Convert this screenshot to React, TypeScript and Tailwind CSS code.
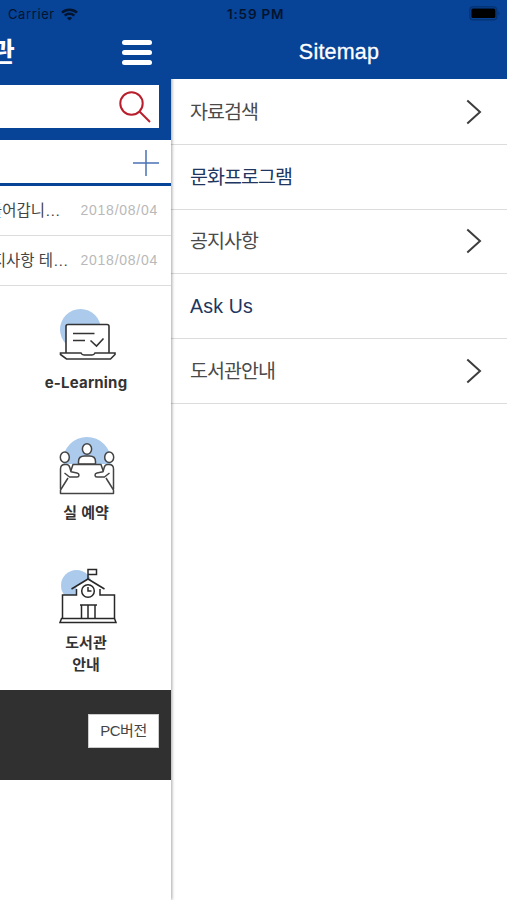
import React from "react";

const FONT = "font-['Liberation_Sans','Noto_Sans_CJK_KR',sans-serif]";

function Chevron() {
  return (
    <svg className="h-[26px] w-4" viewBox="0 0 16 26" fill="none" stroke="#3d3d3d" strokeWidth="2">
      <path d="M1.3 1.5 14 13 1.3 24.5" />
    </svg>
  );
}

function StatusBar() {
  return (
    <div className="absolute inset-x-0 top-0 z-10 h-7 leading-7 text-[#03142f]">
      <div className="absolute left-[8px] flex items-center font-['Inter',sans-serif]">
        <span className="text-[13px] tracking-[0.6px]">Carrier</span>
        <svg className="ml-[6px] h-[13px] w-[17px]" viewBox="0 0 17 13" fill="none" stroke="#03142f" strokeWidth="2.6">
          <path d="M1 4.6C5.2.7 11.8.7 16 4.6" />
          <path d="M3.7 7.6c2.7-2.4 6.9-2.4 9.6 0" />
          <path d="M8.5 12.6 5.8 9.9c1.4-1.3 4-1.3 5.4 0z" fill="#03142f" stroke="none" />
        </svg>
      </div>
      <span className="absolute left-[227px] font-['Inter',sans-serif] text-[13.5px] font-semibold tracking-[0.8px]">1:59 PM</span>
      <svg className="absolute left-[469px] top-[6px] h-[15px] w-8" viewBox="0 0 32 15">
        <rect x="0.8" y="0.8" width="27" height="13" rx="3.4" fill="none" stroke="#063270" strokeWidth="1.2" />
        <rect x="2.4" y="2.6" width="24" height="9.4" rx="1.5" fill="#000" />
        <path d="M29.3 5.2c1.5.6 1.5 3.8 0 4.4z" fill="#063270" />
      </svg>
    </div>
  );
}

function Notice({ title, gap }: { title: string; gap: string }) {
  return (
    <div className="flex h-[50px] items-center justify-end border-b border-[#dcdcdc] pr-[12.5px]">
      <span className={`shrink-0 whitespace-nowrap text-[15.5px] text-[#444] ${gap}`}>{title}</span>
      <span className="w-[78px] shrink-0 whitespace-nowrap text-[14px] tracking-[0.75px] text-[#b9b9b9]">2018/08/04</span>
    </div>
  );
}

function LaptopIcon() {
  return (
    <svg className="ml-[4px] h-[54px] w-[58px]" viewBox="0 0 58 54" fill="none" stroke="#333" strokeWidth="1.6">
      <circle cx="21.5" cy="20.5" r="20.5" fill="#abcaec" stroke="none" />
      <path d="M7 44V17.5q0-2 2-2h39q2 0 2 2V44" fill="#fff" />
      <path d="M1.5 44h20.500q1 2 3 2h8q2 0 3-2h20v1.5L51.5 50h-44L1.500 45.5z" fill="#fff" />
      <path d="M14 24.5H35.500M14 31.5h12M31.5 31.5l6 5.5 7-7.5" />
    </svg>
  );
}

function MeetingIcon() {
  return (
    <svg className="-mt-px ml-[1px] h-[59px] w-[58px]" viewBox="0 0 58 59" fill="none" stroke="#444" strokeWidth="1.5" strokeLinejoin="round">
      <circle cx="29" cy="25" r="24" fill="#abcaec" stroke="none" />
      <path d="M20.5 28v-2.500q0-5.500 6-5.500h5q6 0 6 5.500V28z" fill="#fff" />
      <ellipse cx="29" cy="13" rx="4.600" ry="5.300" fill="#fff" />
      <path d="M2 57V33q0-5 5-5h44q5 0 5 5v24z" fill="#fff" stroke="none" />
      <path d="M12.800 35 15 28.500h28L45.200 35M10 42 2.500 54v3.500h53V54L48 42" />
      <path d="M2.500 53V33q0-4.500 4.500-4.500h1.500q2.500 0 3.300 3l1.200 4.300 6 1.200q2 .5 2 2.200-.1 1.800-2 1.800h-7.500L6.500 37" fill="#fff" />
      <path d="M55.500 53V33q0-4.500-4.500-4.500h-1.500q-2.500 0-3.300 3L45 35.800 39 37q-2 .5-2 2.200.1 1.800 2 1.800h7.500l5-4" fill="#fff" />
      <ellipse cx="6.800" cy="21.200" rx="4.500" ry="5.300" fill="#fff" />
      <ellipse cx="51.200" cy="21.200" rx="4.500" ry="5.300" fill="#fff" />
    </svg>
  );
}

function SchoolIcon() {
  return (
    <svg className="ml-[4px] h-[56px] w-[58px]" viewBox="0 0 58 56" fill="none" stroke="#282828" strokeWidth="1.5">
      <circle cx="17.500" cy="17.500" r="15.500" fill="#abcaec" stroke="none" />
      <path d="M29 11 17.500 18v9H3.500v24h52V27h-14v-9z" fill="#fff" stroke="none" />
      <path d="M12.500 21 29 11l16.500 10" />
      <path d="M17.500 21v6h-14v23.500M41 21v6h14.500v23.500M29 11V1.500h8.500v5H29" />
      <circle cx="29" cy="23" r="6.300" />
      <path d="M29 19v4h3.500M21 37h17M22.500 37v13.500M29 37v13.500M36 37v13.500M2.500 50.500h53l1.500 4H1z" />
    </svg>
  );
}

const ENTRIES = [
  { label: "자료검색", more: true },
  { label: "문화프로그램", more: false },
  { label: "공지사항", more: true },
  { label: "Ask Us", more: false },
  { label: "도서관안내", more: true },
];

export default function App() {
  return (
    <div className={`relative flex h-[900px] w-[507px] overflow-hidden bg-white ${FONT}`}>
      <StatusBar />

      <div className="z-[1] w-[171px] shrink-0 overflow-hidden bg-white shadow-[1px_0_3px_rgba(0,0,0,0.35)]">
        <header className="h-[140px] bg-[#074397] pt-[34px]">
          <div className="flex h-[36px] items-center justify-between pr-[19px]">
            <span className="-ml-[10px] pt-[2px] text-[27px] font-bold leading-9 text-white">관</span>
            <div className="flex w-[30px] flex-col gap-[5px]">
              <i className="h-[5px] rounded-full bg-white" />
              <i className="h-[5px] rounded-full bg-white" />
              <i className="h-[5px] rounded-full bg-white" />
            </div>
          </div>
          <div className="mt-[15px] flex h-[43px] w-[159px] items-center justify-end bg-white pr-[8px]">
            <svg className="h-8 w-8" viewBox="0 0 32 32" fill="none" stroke="#b81e2b" strokeWidth="2">
              <circle cx="12.500" cy="12.500" r="11.200" />
              <path d="m20.500 20.500 10.500 10.500" />
            </svg>
          </div>
        </header>

        <div className="flex h-[46px] items-center justify-end border-b-[3px] border-[#074397] pr-3 pt-[2px]">
          <svg className="h-[26px] w-[26px]" viewBox="0 0 26 26" stroke="#4a72b5" strokeWidth="1.500">
            <path d="M13 0v26M0 13h26" />
          </svg>
        </div>
        <Notice title="들어갑니…" gap="mr-[20px]" />
        <Notice title="공지사항 테…" gap="mr-[12px]" />

        <div className="flex h-[404px] flex-col items-end pr-[26px] text-[15px] font-bold leading-[22px] text-[#333]">
          <div className="flex h-[151px] w-[118px] flex-col items-center pt-[23px]">
            <LaptopIcon />
            <span className="mt-[9px] whitespace-nowrap font-['Inter','Noto_Sans_CJK_KR',sans-serif] text-[15px] tracking-[0.200px]">e-Learning</span>
          </div>
          <div className="flex h-[131px] w-[118px] flex-col items-center">
            <MeetingIcon />
            <span className="mt-[7px]">실 예약</span>
          </div>
          <div className="flex w-[118px] flex-col items-center text-center">
            <SchoolIcon />
            <span className="mt-[8px]">도서관<br />안내</span>
          </div>
        </div>

        <footer className="flex h-[90px] justify-end bg-[#303030] pr-3 pt-6">
          <div className="flex h-[34px] w-[71px] items-center justify-center border border-[#ccc] bg-white text-[15px] tracking-[-0.500px] text-[#444]">PC버전</div>
        </footer>
      </div>

      <aside className="flex-1 bg-white">
        <h1 className="relative z-[2] flex h-[79px] items-center justify-center bg-[#074397] pt-[26px] text-[21.500px] tracking-[0.200px] text-white [-webkit-text-stroke:0.300px_white]">Sitemap</h1>
        <nav className="pt-px">
          {ENTRIES.map((item) => (
            <div key={item.label} className="flex h-[64.800px] items-center justify-between border-b border-[#dcdcdc] pl-[19px] pr-[25px]">
              <span className={`pt-px text-[19.500px] ${item.label === "Ask Us" ? "tracking-[0.200px]" : "tracking-[-0.950px]"} ${item.more ? "text-[#4a4a4a]" : "text-[#20365f]"}`}>{item.label}</span>
              {item.more && <Chevron />}
            </div>
          ))}
        </nav>
      </aside>
    </div>
  );
}
